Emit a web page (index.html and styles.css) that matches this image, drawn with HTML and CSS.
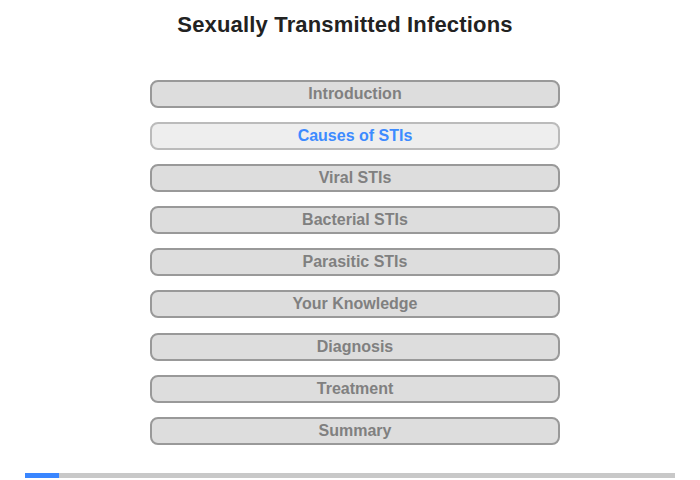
FILE: index.html
```html
<!DOCTYPE html>
<html>
<head>
<meta charset="utf-8">
<link rel="stylesheet" href="styles.css">
</head>
<body>
<div class="page">
  <h1 class="title">Sexually Transmitted Infections</h1>
  <nav class="menu">
    <div class="item">Introduction</div>
    <div class="item active">Causes of STIs</div>
    <div class="item">Viral STIs</div>
    <div class="item">Bacterial STIs</div>
    <div class="item">Parasitic STIs</div>
    <div class="item">Your Knowledge</div>
    <div class="item">Diagnosis</div>
    <div class="item">Treatment</div>
    <div class="item">Summary</div>
  </nav>
  <div class="progress"><div class="progress-fill" style="width:34px"></div></div>
</div>
</body>
</html>
```
FILE: styles.css
```css
html, body {
  margin: 0;
  padding: 0;
  background: #fff;
}
.page {
  width: 700px;
  height: 480px;
  display: flex;
  flex-direction: column;
  align-items: center;
  font-family: "Liberation Sans", Arial, sans-serif;
}
.title {
  margin: 13px 0 0 0;
  height: 24px;
  line-height: 24px;
  font-size: 22px;
  font-weight: bold;
  letter-spacing: 0.17px;
  color: #222;
  transform: translateX(-5px);
}
.menu {
  margin-top: 43px;
  display: flex;
  flex-direction: column;
  gap: 14.1px;
  width: 410px;
  transform: translateX(5px);
}
.item {
  box-sizing: border-box;
  height: 28px;
  border: 2px solid #999;
  border-radius: 8px;
  background: #ddd;
  color: #808080;
  font-size: 16px;
  font-weight: bold;
  text-align: center;
  line-height: 24px;
}
.item.active {
  background: #eee;
  border-color: #bbb;
  color: #3d8bff;
}
.progress {
  margin-top: auto;
  margin-bottom: 2px;
  width: 650px;
  height: 5px;
  background: #c8c8c8;
}
.progress-fill {
  height: 100%;
  background: #3a86ff;
}
```
